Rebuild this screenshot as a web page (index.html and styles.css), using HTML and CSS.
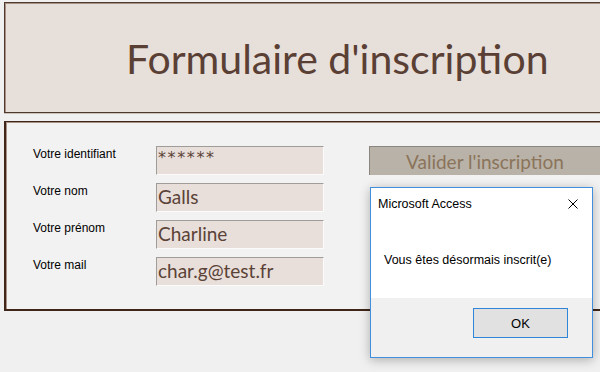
FILE: index.html
```html
<!DOCTYPE html>
<html lang="fr">
<head>
<meta charset="utf-8">
<title>Formulaire d'inscription</title>
<link rel="stylesheet" href="styles.css">
</head>
<body>
<div class="screen">
  <header class="title-box">
    <h1 class="title">Formulaire d'inscription</h1>
  </header>
  <section class="form-box">
    <div class="fields">
      <div class="lbl">Votre identifiant</div>
      <div class="field masked">******</div>
      <div class="lbl">Votre nom</div>
      <div class="field">Galls</div>
      <div class="lbl">Votre prénom</div>
      <div class="field">Charline</div>
      <div class="lbl">Votre mail</div>
      <div class="field">char.g@test.fr</div>
    </div>
    <div class="actions">
      <button class="validate" type="button">Valider l'inscription</button>
    </div>
  </section>
  <div class="dialog" role="dialog">
    <div class="dlg-head">
      <span class="dlg-title">Microsoft Access</span>
      <svg class="dlg-close" width="10" height="10" viewBox="0 0 10 10"><path d="M0.5 0.5 L9.5 9.5 M9.5 0.5 L0.5 9.5" stroke="#000" stroke-width="1" fill="none"/></svg>
    </div>
    <div class="dlg-body">Vous êtes désormais inscrit(e)</div>
    <div class="dlg-foot">
      <button class="dlg-ok" type="button">OK</button>
    </div>
  </div>
</div>
</body>
</html>
```
FILE: styles.css
```css
html, body {
  margin: 0;
  padding: 0;
  width: 600px;
  height: 372px;
  overflow: hidden;
  background: #f0f0f0;
}
.screen {
  position: relative;
  width: 600px;
  height: 372px;
  box-sizing: border-box;
  padding: 2px 0 0 4px;
}
.title-box {
  width: 596px;
  height: 111px;
  box-sizing: border-box;
  background: #e7dfda;
  border: 1px solid #4f392d;
  border-right: none;
  box-shadow: inset 1px 1px 0 #a89186, 0 1px 0 #c9c1bc;
  display: flex;
  align-items: center;
  padding-left: 121px;
}
.title {
  margin: 0;
  font-family: Lato, "Open Sans", sans-serif;
  font-weight: 400;
  font-size: 41px;
  color: #5a4034;
  line-height: 1;
  padding-top: 2px;
}
.form-box {
  margin-top: 8px;
  width: 596px;
  height: 190px;
  box-sizing: border-box;
  background: #f2f2f2;
  border: 1px solid #3f2618;
  border-right: none;
  border-left-width: 2px;
  border-bottom-width: 2px;
  box-shadow: inset 1px 1px 0 #a89186;
  display: flex;
  align-items: flex-start;
  padding: 24px 0 0 27px;
}
.fields {
  display: grid;
  grid-template-columns: 123px 168px;
  grid-auto-rows: 29px;
  row-gap: 8px;
}
.lbl {
  font-family: "Liberation Sans", Arial, sans-serif;
  font-size: 12px;
  line-height: 15px;
  padding-top: 1px;
  color: #000;
}
.field {
  box-sizing: border-box;
  background: #e8dfda;
  border-top: 1px solid #a09c99;
  border-left: 1px solid #a09c99;
  border-right: 1px solid #fbfbfb;
  border-bottom: 1px solid #fbfbfb;
  font-family: Lato, "Open Sans", sans-serif;
  font-size: 19px;
  line-height: 26px;
  padding-left: 1px;
  color: #5b4237;
}
.masked {
  font-family: "DejaVu Sans", sans-serif;
  font-size: 16px;
  letter-spacing: 1.6px;
  line-height: 21px;
}
.actions {
  margin-left: 45px;
}
.validate {
  display: block;
  width: 231px;
  height: 29px;
  margin: 0;
  padding: 0;
  box-sizing: border-box;
  background: #b9b2a8;
  border: none;
  border-top: 1px solid #8a857f;
  border-left: 1px solid #8a857f;
  font-family: Lato, "Open Sans", sans-serif;
  font-size: 19px;
  line-height: 27px;
  color: #8b745a;
  text-align: center;
}
.dialog {
  position: absolute;
  left: 370px;
  top: 187px;
  width: 223px;
  height: 171px;
  box-sizing: border-box;
  border: 1px solid #3f8fdd;
  background: #ffffff;
  box-shadow: 0 2px 10px rgba(0, 0, 0, 0.28);
  display: flex;
  flex-direction: column;
  font-family: "Liberation Sans", Arial, sans-serif;
  font-size: 12.5px;
  color: #000;
}
.dlg-head {
  height: 32px;
  display: flex;
  align-items: center;
  justify-content: space-between;
  padding: 0 14px 0 7px;
}
.dlg-title {
  line-height: 15px;
}
.dlg-body {
  flex: 1;
  padding: 33px 0 0 13px;
  box-sizing: border-box;
  line-height: 15px;
}
.dlg-foot {
  height: 59px;
  background: #f0f0f0;
  display: flex;
  justify-content: flex-end;
  align-items: flex-start;
  padding: 10px 24px 0 0;
  box-sizing: border-box;
}
.dlg-ok {
  width: 95px;
  height: 30px;
  margin: 0;
  box-sizing: border-box;
  background: #e1e1e1;
  border: 1px solid #2f86d8;
  font-family: "Liberation Sans", Arial, sans-serif;
  font-size: 13px;
  color: #000;
  padding: 0;
}
```
